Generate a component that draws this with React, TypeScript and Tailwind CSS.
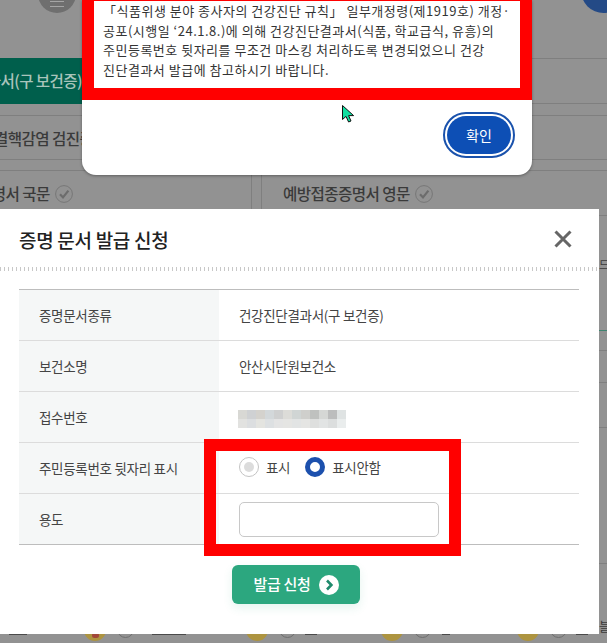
const FONT = "font-['Noto_Sans_CJK_KR','Noto_Sans',sans-serif]";

const rows = [
  { label: "증명문서종류", value: "건강진단결과서(구 보건증)" },
  { label: "보건소명", value: "안산시단원보건소" },
];

// mosaic cells over the blurred receipt number
const mosaicTop = ["#d8d8d4", "#cfd1d3", "#d4d2cd", "#d3d8da", "#cfd0d0", "#dcdcd8", "#d0d5d4", "#cfcfcc", "#bfc1bf", "#d5d7d5", "#bcbdbd", "#dfe3e3"];
const mosaicBottom = ["#e2e2e0", "#dcdee0", "#e4e4e0", "#dde0e2", "#e4e4e4", "#e5e5e3", "#e2e4e4", "#e5e5e3", "#dedfde", "#e2e4e4", "#dcdede", "#eaeded"];

function Check({ className }: { className?: string }) {
  return (
    <svg viewBox="0 0 18 18" className={className}>
      <circle cx="9" cy="9" r="8.4" fill="none" stroke="#777" strokeWidth="1" />
      <path d="M5 9.2 8 12.4 13.4 5.6" fill="none" stroke="#6c6c6c" strokeWidth="2.2" />
    </svg>
  );
}

function Backdrop() {
  return (
    <div className="flex h-[643px] w-[607px] flex-col overflow-hidden bg-[#929292] text-[#3a3a3a]">
      <div className="flex h-[58px] justify-between">
        <div className="ml-[38px] mt-[-25px] flex h-[38px] w-[38px] items-center justify-center rounded-full bg-[#6f6f6f]">
          <div className="mt-[20px] h-[6px] w-[14px] border-y border-[#a5a5a5]" />
        </div>
        <div className="mr-[-19px] mt-[-32px] h-[45px] w-[45px] rounded-full bg-[#244a86]" />
      </div>
      <div className="flex h-[46px]">
        <div className={`flex w-[251px] items-center overflow-hidden bg-[#005f4c] text-[15.6px] font-medium tracking-[-0.6px] text-[#a9c4bb] ${FONT}`}>
          <span className="ml-[-27px] whitespace-nowrap">결과서(구 보건증)</span>
        </div>
        <div className="flex-1 border-y border-[#7f7f7f]" />
      </div>
      <div className="h-[11px]" />
      <div className={`flex h-[44px] items-center overflow-hidden border-t border-[#7f7f7f] pt-[2px] text-[15.6px] font-medium tracking-[-0.6px] ${FONT}`}>
        <span className="ml-[-6px] whitespace-nowrap">결핵감염 검진증명서</span>
      </div>
      <div className="h-[12px] border-y border-[#7f7f7f]" />
      <div className={`flex h-[38px] text-[15.6px] font-medium tracking-[-0.6px] ${FONT}`}>
        <div className="flex w-[252px] items-center gap-[5px] overflow-hidden border-r border-[#7f7f7f] pt-[8px]">
          <span className="ml-[-22px] whitespace-nowrap">증명서 국문</span>
          <Check className="h-[18px] w-[18px]" />
        </div>
        <div className="ml-[9px] flex flex-1 items-center gap-[5px] border-l border-[#7f7f7f] pl-[21px] pt-[8px]">
          <span>예방접종증명서 영문</span>
          <Check className="h-[18px] w-[18px]" />
        </div>
      </div>
      {/* sliver of the page that is still visible right of the sheet */}
      <div className="ml-[599px] flex h-[425px] flex-col">
        <div className="mt-[6px] h-[41px] border-t border-[#7f7f7f]" />
        <div className={`h-[74px] text-[11px] leading-[16px] ${FONT}`}>드</div>
        <div className="h-[20px] border-t border-[#3e8470]" />
        <div className="h-[32px] border-t border-[#7f7f7f]" />
        <div className="h-[46px] border-t border-[#7f7f7f]" />
        <div className="h-[136px] border-t border-[#7f7f7f]" />
        <div className={`border-t border-[#7f7f7f] pt-[54px] text-[13px] leading-[16px] ${FONT}`}>블</div>
      </div>
    </div>
  );
}

function BottomPeek() {
  const items = [
    { ml: "ml-[84px]", dot: true },
    { ml: "ml-[112px]", dot: false },
    { ml: "ml-[85px]", dot: false },
    { ml: "ml-[86px]", dot: false },
  ];
  return (
    <div className="absolute left-0 top-[634px] h-[9px] w-[607px] overflow-hidden">
      <div className="flex h-[9px]">
        {items.map((item, i) => (
          <div key={i} className={`${item.ml} flex items-start gap-[11px]`}>
            <div className="mt-[-15px] flex h-[22px] w-[22px] items-end justify-center rounded-full bg-[#ad9440] pb-[3px]">
              {item.dot && <div className="h-[5px] w-[7px] rounded-full bg-[#a2473a]" />}
            </div>
            <div className="mt-[-13px] h-[17px] w-[17px] rounded-full border border-[#6f6f6f]" />
          </div>
        ))}
      </div>
      {/* feet of the table text that is cut off by the sheet */}
      <div className="mt-[-9px] flex h-[1px]">
        <div className="ml-[9px] w-[18px] bg-[#4a4a4a]" />
        <div className="ml-[125px] w-[34px] bg-[#4a4a4a]" />
        <div className="ml-[119px] w-[12px] bg-[#4a4a4a]" />
        <div className="ml-[125px] w-[8px] bg-[#4a4a4a]" />
        <div className="ml-[126px] w-[12px] bg-[#4a4a4a]" />
      </div>
    </div>
  );
}

function NoticeAlert() {
  return (
    <div className="absolute left-[82px] top-0 flex h-[175px] w-[450px] flex-col rounded-b-[14px] bg-white shadow-[0_1px_3px_rgba(0,0,0,0.35)]">
      <div className="h-[100px] border-x-[12px] border-b-[12px] border-t border-[#ff0000] bg-white pl-[9px]">
        <p className={`whitespace-nowrap text-[13px] leading-[19.7px] tracking-[0.5px] text-[#333] ${FONT}`}>
          <span className="block">「식품위생 분야 종사자의 건강진단 규칙」 일부개정령(제1919호) 개정·</span>
          <span className="block">공포(시행일 ‘24.1.8.)에 의해 건강진단결과서(식품, 학교급식, 유흥)의</span>
          <span className="block">주민등록번호 뒷자리를 무조건 마스킹 처리하도록 변경되었으니 건강</span>
          <span className="block">진단결과서 발급에 참고하시기 바랍니다.</span>
        </p>
      </div>
      <div className="flex justify-end pr-[17px] pt-[12px]">
        <button className="h-[46px] w-[72px] rounded-full border-2 border-[#1a52ac] bg-white p-[2px]">
          <span className={`flex h-full w-full items-center justify-center rounded-full bg-[#0d4fb5] text-[14px] text-white ${FONT}`}>확인</span>
        </button>
      </div>
    </div>
  );
}

function IssueSheet() {
  return (
    <div className={`absolute left-0 top-[209px] h-[425px] w-[599px] bg-white ${FONT}`}>
      <div className="flex h-[58px] items-center justify-between pl-[19px] pr-[27px] pt-[4px]">
        <h2 className="text-[19px] font-medium tracking-[-0.3px] text-[#222]">증명 문서 발급 신청</h2>
        <svg viewBox="0 0 18 18" className="mb-[3px] h-[18px] w-[18px]">
          <path d="M1.5 1.5 16.5 16.5M16.5 1.5 1.5 16.5" fill="none" stroke="#666" strokeWidth="3" />
        </svg>
      </div>
      <div className="h-[4px] bg-[repeating-linear-gradient(90deg,#c8c8c8_0,#c8c8c8_1px,transparent_1px,transparent_4px)]" />
      <div className="ml-[19px] mr-[20px] mt-[18px] border-y border-[#bdbdbd] text-[13.5px] tracking-[-0.3px] text-[#444]">
        {rows.map((r) => (
          <div key={r.label} className="flex h-[51px] border-b border-[#dcdcdc]">
            <div className="flex w-[200px] items-center bg-[#f5f7f7] pl-[20px]">{r.label}</div>
            <div className="flex flex-1 items-center pl-[20px]">{r.value}</div>
          </div>
        ))}
        <div className="flex h-[51px] border-b border-[#dcdcdc]">
          <div className="flex w-[200px] items-center bg-[#f5f7f7] pl-[20px]">접수번호</div>
          <div className="flex flex-1 items-center pl-[19px] pt-[3px]">
            <div className="w-[108px]">
              <div className="flex h-[9px]">
                {mosaicTop.map((c, i) => (
                  <div key={i} className="h-full w-[9px]" style={{ backgroundColor: c }} />
                ))}
              </div>
              <div className="flex h-[9px]">
                {mosaicBottom.map((c, i) => (
                  <div key={i} className="h-full w-[9px]" style={{ backgroundColor: c }} />
                ))}
              </div>
            </div>
          </div>
        </div>
        <div className="flex h-[51px] border-b border-[#dcdcdc]">
          <div className="flex w-[200px] items-center bg-[#f5f7f7] pl-[20px]">주민등록번호 뒷자리 표시</div>
          <div className="flex flex-1 items-start gap-[7px] pl-[20px] pt-[14px]">
            <div className="flex h-[20px] w-[20px] items-center justify-center rounded-full border border-[#c4c4c4]">
              <div className="h-[10px] w-[10px] rounded-full bg-[#dcdcdc]" />
            </div>
            <span className="mr-[8px] leading-[20px]">표시</span>
            <div className="h-[20px] w-[20px] rounded-full border-[5.5px] border-[#1c50ad] bg-white" />
            <span className="leading-[20px]">표시안함</span>
          </div>
        </div>
        <div className="flex h-[50px]">
          <div className="flex w-[200px] items-center bg-[#f5f7f7] pl-[20px]">용도</div>
          <div className="flex flex-1 items-start pl-[20px] pt-[8px]">
            <input className="h-[35px] w-[200px] rounded-[5px] border border-[#c8c8c8] bg-white" />
          </div>
        </div>
      </div>
      <div className="mt-[20px] flex justify-center pr-[7px]">
        <button className="flex h-[39px] w-[128px] items-center justify-center gap-[8px] rounded-[6px] bg-[#2ca77f] text-[15px] font-medium tracking-[-0.3px] text-white shadow-[0_4px_10px_rgba(44,167,127,0.12)]">
          발급 신청
          <svg viewBox="0 0 20 20" className="h-[20px] w-[20px]">
            <circle cx="10" cy="10" r="10" fill="#fff" />
            <path d="M8 5.5 12.4 10 8 14.5" fill="none" stroke="#1f8a6c" strokeWidth="2.6" />
          </svg>
        </button>
      </div>
    </div>
  );
}

export default function App() {
  return (
    <div className="relative h-[643px] w-[607px] overflow-hidden">
      <Backdrop />
      <BottomPeek />
      <NoticeAlert />
      <IssueSheet />
      {/* red marker drawn over the radio and input rows */}
      <div className="absolute left-[204px] top-[439px] h-[117px] w-[257px] border-[12px] border-[#ff0000]" />
      <svg viewBox="0 0 13 18" className="absolute left-[342px] top-[105px] h-[18px] w-[13px]">
        <path d="M.5.5V14.5L4 11.4 6.6 17 9 16 6.6 10.6H11.6Z" fill="#0fe0a0" stroke="#111" strokeWidth="1" />
      </svg>
    </div>
  );
}
